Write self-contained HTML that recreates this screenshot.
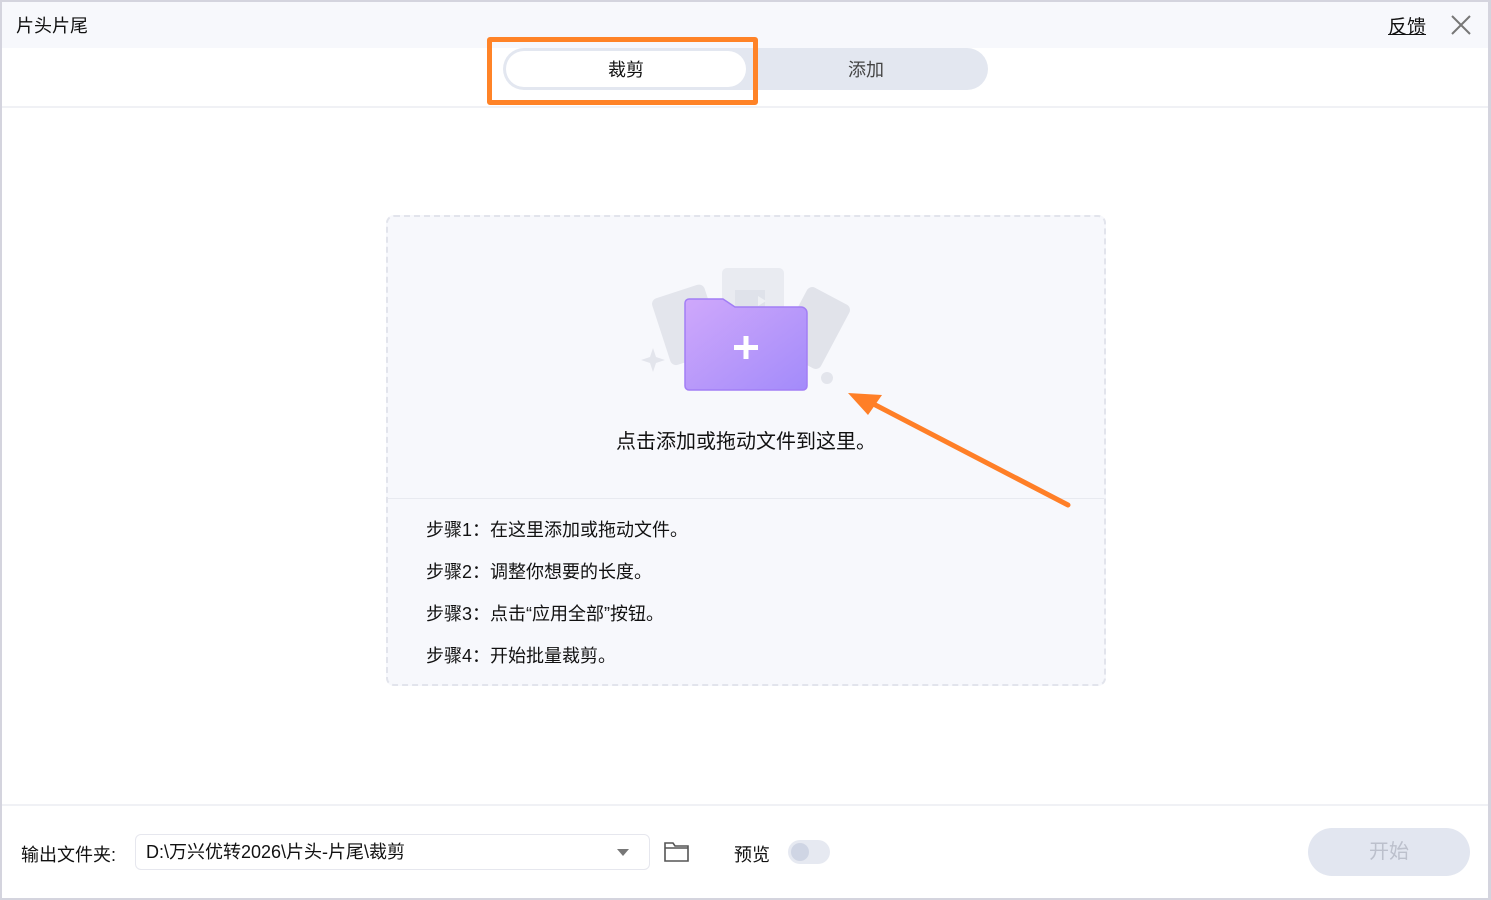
<!DOCTYPE html>
<html><head><meta charset="utf-8"><style>
*{margin:0;padding:0;box-sizing:border-box}
body{width:1491px;height:900px;overflow:hidden;background:#fff;font-family:"Liberation Sans","Noto Sans CJK SC",sans-serif;color:#111;position:relative}
.frame{position:absolute;left:0;top:0;width:1491px;height:900px;border:2px solid #d4d4de;border-right-width:3px}
.a{position:absolute}
</style></head><body>
<div class="a" style="left:0;top:0;width:1491px;height:48px;background:#f7f8fc"></div>
<div class="a" style="left:16px;top:12px;font-size:18px">片头片尾</div>
<div class="a" style="left:1388px;top:12px;font-size:19px;text-decoration:underline">反馈</div>
<svg class="a" style="left:1450px;top:14px" width="22" height="22"><path d="M2 2L20 20M20 2L2 20" stroke="#777" stroke-width="2"/></svg>
<div class="a" style="left:0;top:106px;width:1491px;height:2px;background:#f0f1f5"></div>
<div class="a" style="left:503px;top:48px;width:485px;height:42px;border-radius:21px;background:#e3e7f0"></div>
<div class="a" style="left:506px;top:51px;width:240px;height:36px;border-radius:18px;background:#fff;font-size:18px;text-align:center;line-height:38px">裁剪</div>
<div class="a" style="left:746px;top:51px;width:240px;height:36px;font-size:18px;text-align:center;line-height:38px;color:#444">添加</div>
<div class="a" style="left:487px;top:37px;width:271px;height:68px;border:5px solid #ff8327;border-radius:3px"></div>

<div class="a" style="left:386px;top:215px;width:720px;height:471px;background:#f7f8fc;border:2px dashed #e2e4ec;border-radius:8px"></div>
<div class="a" style="left:388px;top:498px;width:716px;height:1px;background:#e8eaf0"></div>
<svg class="a" style="left:640px;top:260px" width="210" height="140">
<rect x="82" y="8" width="62" height="80" rx="5" fill="#e9ebf1"/>
<rect x="95" y="30" width="30" height="22" fill="#dfe2ea"/>
<path d="M118 36l8 5-8 5z" fill="#eef0f4"/>
<rect x="20" y="30" width="55" height="70" rx="6" fill="#e3e5ec" transform="rotate(-18 47 65)"/>
<rect x="150" y="32" width="48" height="72" rx="6" fill="#e1e3ea" transform="rotate(28 174 68)"/>
<path d="M13 88l3 9 9 3-9 3-3 9-3-9-9-3 9-3z" fill="#e3e5ec"/>
<circle cx="187" cy="118" r="6" fill="#e3e5ec"/>
<defs><linearGradient id="g" x1="0" y1="0" x2="1" y2="1"><stop offset="0" stop-color="#cfa8fb"/><stop offset="1" stop-color="#a38bfa"/></linearGradient></defs>
<path d="M49 39h34l12 8h66a6 6 0 0 1 6 6v73a4 4 0 0 1-4 4H49a4 4 0 0 1-4-4V43a4 4 0 0 1 4-4z" fill="url(#g)" stroke="#a27ef5" stroke-width="1.5"/>
<rect x="94" y="85" width="24" height="5" fill="#fff"/><rect x="103.5" y="76" width="5" height="23" fill="#fff"/>
</svg>
<div class="a" style="left:386px;top:425px;width:720px;text-align:center;font-size:20px">点击添加或拖动文件到这里。</div>
<svg class="a" style="left:840px;top:385px" width="240" height="130"><path d="M228 120L20 12" stroke="#ff7f27" stroke-width="5" stroke-linecap="round"/><path d="M8 8l34 2-14 20z" fill="#ff7f27"/></svg>
<div class="a" style="left:426px;top:509px;font-size:18px;line-height:42px">步骤1：在这里添加或拖动文件。<br>步骤2：调整你想要的长度。<br>步骤3：点击“应用全部”按钮。<br>步骤4：开始批量裁剪。</div>

<div class="a" style="left:0;top:804px;width:1491px;height:2px;background:#f0f1f5"></div>
<div class="a" style="left:21px;top:841px;font-size:18px">输出文件夹:</div>
<div class="a" style="left:135px;top:834px;width:515px;height:36px;border:1px solid #e6e7ee;border-radius:6px;font-size:18px;line-height:34px;padding-left:10px">D:\万兴优转2026\片头-片尾\裁剪</div>
<svg class="a" style="left:616px;top:848px" width="14" height="9"><path d="M1 1h12L7 8z" fill="#777"/></svg>
<svg class="a" style="left:663px;top:840px" width="27" height="24"><path d="M2 3h8l2 3h13v15H2z M2 8h23" fill="none" stroke="#555" stroke-width="1.6"/></svg>
<div class="a" style="left:734px;top:841px;font-size:18px">预览</div>
<div class="a" style="left:788px;top:840px;width:42px;height:24px;border-radius:12px;background:#e6e9f1"></div>
<div class="a" style="left:791px;top:843px;width:18px;height:18px;border-radius:9px;background:#cfd5e4"></div>
<div class="a" style="left:1308px;top:828px;width:162px;height:48px;border-radius:24px;background:#e2e6f0;color:#bcc0cc;font-size:20px;text-align:center;line-height:48px">开始</div>
<div class="frame"></div>
</body></html>
